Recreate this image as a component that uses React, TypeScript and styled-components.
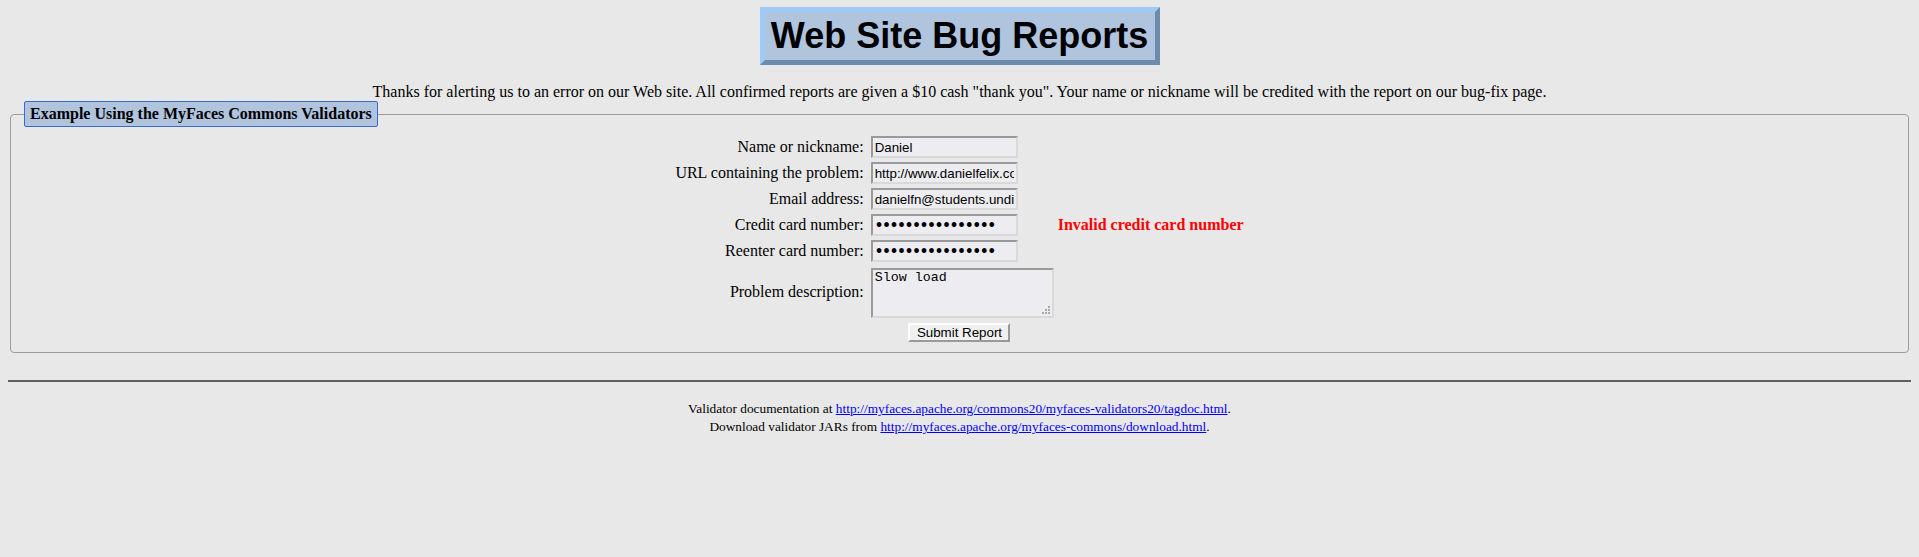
import React from "react";
import styled, { createGlobalStyle } from "styled-components";

const GlobalStyle = createGlobalStyle`
  html, body {
    margin: 0;
    padding: 0;
    background: #e8e8e8;
  }
  body {
    font-family: "Liberation Serif", "Times New Roman", serif;
    font-size: 16px;
    color: #000;
  }
`;

const Page = styled.div`
  padding: 7px 8px 8px;
`;

const TitleRow = styled.div`
  display: flex;
  justify-content: center;
`;

const Title = styled.h1`
  margin: 0;
  width: 400px;
  box-sizing: border-box;
  height: 58px;
  line-height: 48px;
  text-align: center;
  font-family: "Liberation Sans", Arial, sans-serif;
  font-size: 36px;
  font-weight: bold;
  background: #b0c4de;
  border: 5px solid;
  border-color: #9ecbf6 #6d8baa #6d8baa #9ecbf6;
`;

const Intro = styled.p`
  margin: 18px 0 0;
  line-height: 18px;
  text-align: center;
`;

const Fieldset = styled.fieldset`
  margin: 0 2px;
  padding: 9px 12px 10px;
  border: 1px solid #9c9c9c;
  border-radius: 4px;
  min-width: 0;
`;

const Legend = styled.legend`
  margin-left: 1px;
  padding: 3px 5px;
  line-height: 18px;
  font-weight: bold;
  background: #b0c4de;
  border: 1px solid #3a6ad0;
  border-radius: 2px;
`;

const FormGrid = styled.div`
  display: grid;
  grid-template-columns: auto 183px auto;
  justify-content: center;
  column-gap: 4px;
  row-gap: 4px;
  align-items: center;
`;

const Label = styled.label`
  padding-right: 3px;
  text-align: right;
  line-height: 18px;
  white-space: nowrap;
`;

const TextInput = styled.input<{ $masked?: boolean }>`
  box-sizing: border-box;
  width: 147px;
  height: 22px;
  margin: 0;
  padding: 1px 2px;
  font-family: ${(p) => (p.$masked ? '"DejaVu Sans", sans-serif' : '"Liberation Sans", Arial, sans-serif')};
  font-size: 13.33px;
  font-weight: ${(p) => (p.$masked ? "bold" : "normal")};
  letter-spacing: ${(p) => (p.$masked ? "-1px" : "normal")};
  color: #000;
  background: #ececf1;
  border: 2px solid;
  border-color: #9a9a9a #d9d9d9 #d9d9d9 #9a9a9a;
  outline: none;
`;

const AreaWrap = styled.div`
  position: relative;
  width: 183px;
  height: 50px;
  margin-top: 2px;
`;

const TextArea = styled.textarea`
  display: block;
  box-sizing: border-box;
  width: 183px;
  height: 50px;
  margin: 0;
  padding: 0 2px;
  resize: none;
  font-family: "Liberation Mono", "Courier New", monospace;
  font-size: 13.33px;
  line-height: 16px;
  color: #000;
  background: #ececf1;
  border: 2px solid;
  border-color: #9a9a9a #d9d9d9 #d9d9d9 #9a9a9a;
  outline: none;
`;

const Grip = styled.svg`
  position: absolute;
  right: 4px;
  bottom: 4px;
  width: 8px;
  height: 8px;
  pointer-events: none;
`;

const ErrorText = styled.span`
  color: #ff0000;
  font-weight: bold;
  line-height: 18px;
  white-space: nowrap;
`;

const Empty = styled.span``;

const SubmitCell = styled.div`
  grid-column: 1 / -1;
  display: flex;
  justify-content: center;
  margin-top: 1px;
`;

const SubmitButton = styled.button`
  box-sizing: border-box;
  width: 102px;
  height: 19px;
  margin: 0;
  padding: 0;
  font-family: "Liberation Sans", Arial, sans-serif;
  font-size: 13.33px;
  color: #000;
  background: #f0f0f0;
  border: 2px solid;
  border-color: #ffffff #9a9a9a #9a9a9a #ffffff;
  line-height: 15px;
`;

const Rule = styled.hr`
  margin: 27px 0 0;
  height: 0;
  border: none;
  border-top: 2px solid #5e5e5e;
`;

const Footer = styled.div`
  margin-top: 18px;
  font-size: 13.33px;
  line-height: 18px;
  text-align: center;
`;

const Link = styled.a`
  color: #0000ee;
  text-decoration: underline;
`;

const fields = [
  { label: "Name or nickname:", value: "Daniel", type: "text" },
  { label: "URL containing the problem:", value: "http://www.danielfelix.com/", type: "text" },
  { label: "Email address:", value: "danielfn@students.undip.ac.id", type: "text" },
  { label: "Credit card number:", value: "1234567812345678", type: "password", error: "Invalid credit card number" },
  { label: "Reenter card number:", value: "1234567812345678", type: "password" },
];

export default function App() {
  return (
    <>
      <GlobalStyle />
      <Page>
        <TitleRow>
          <Title>Web Site Bug Reports</Title>
        </TitleRow>
        <Intro>
          Thanks for alerting us to an error on our Web site. All confirmed reports are given a $10 cash "thank you". Your name or nickname will be credited with the report on our bug-fix page.
        </Intro>
        <Fieldset>
          <Legend>Example Using the MyFaces Commons Validators</Legend>
          <FormGrid>
            {fields.map((f) => (
              <React.Fragment key={f.label}>
                <Label>{f.label}</Label>
                <div>
                  <TextInput type={f.type} $masked={f.type === "password"} defaultValue={f.value} />
                </div>
                {f.error ? <ErrorText>{f.error}</ErrorText> : <Empty />}
              </React.Fragment>
            ))}
            <Label>Problem description:</Label>
            <AreaWrap>
              <TextArea defaultValue="Slow load" />
              <Grip viewBox="0 0 8 8">
                <rect x="6" y="0" width="2" height="2" fill="#a8a8a8" />
                <rect x="3" y="3" width="2" height="2" fill="#a8a8a8" />
                <rect x="6" y="3" width="2" height="2" fill="#a8a8a8" />
                <rect x="0" y="6" width="2" height="2" fill="#a8a8a8" />
                <rect x="3" y="6" width="2" height="2" fill="#a8a8a8" />
                <rect x="6" y="6" width="2" height="2" fill="#a8a8a8" />
              </Grip>
            </AreaWrap>
            <Empty />
            <SubmitCell>
              <SubmitButton type="button">Submit Report</SubmitButton>
            </SubmitCell>
          </FormGrid>
        </Fieldset>
        <Rule />
        <Footer>
          Validator documentation at{" "}
          <Link href="#">http://myfaces.apache.org/commons20/myfaces-validators20/tagdoc.html</Link>.
          <br />
          Download validator JARs from{" "}
          <Link href="#">http://myfaces.apache.org/myfaces-commons/download.html</Link>.
        </Footer>
      </Page>
    </>
  );
}
